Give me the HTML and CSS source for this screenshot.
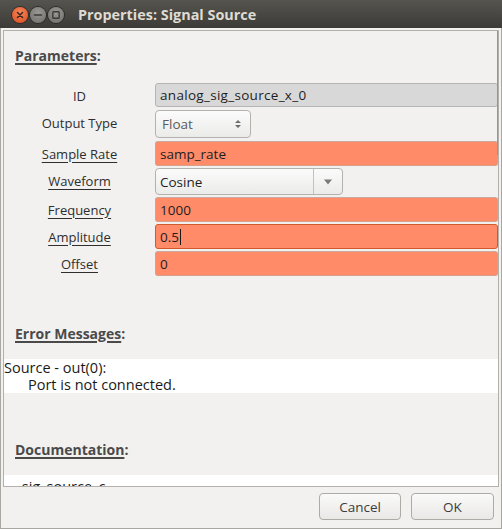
FILE: index.html
```html
<!DOCTYPE html>
<html>
<head>
<meta charset="utf-8">
<title>Properties: Signal Source</title>
<link rel="stylesheet" href="styles.css">
</head>
<body>
<div class="window">
  <div class="titlebar">
    <div class="wm-buttons">
      <span class="wm-btn close"><svg width="16" height="16" viewBox="0 0 16 16"><path d="M5.5 5.5 L10.5 10.5 M10.5 5.5 L5.5 10.5" stroke="#3a2a22" stroke-width="1.6" stroke-linecap="round"/></svg></span>
      <span class="wm-btn"><svg width="16" height="16" viewBox="0 0 16 16"><path d="M4.5 8 H11.5" stroke="#3c3b37" stroke-width="1.6" stroke-linecap="round"/></svg></span>
      <span class="wm-btn"><svg width="16" height="16" viewBox="0 0 16 16"><rect x="4.8" y="4.8" width="6.4" height="6.4" rx="0.8" fill="none" stroke="#3c3b37" stroke-width="1.4"/></svg></span>
    </div>
    <div class="title">Properties: Signal Source</div>
  </div>
  <div class="client">
    <div class="frame">
      <div class="content">
        <div class="heading heading-params"><span class="ul">Parameters</span>:</div>
        <div class="params">
          <div class="label">ID</div>
          <div class="cell"><div class="entry entry-disabled">analog_sig_source_x_0</div></div>

          <div class="label">Output Type</div>
          <div class="cell"><div class="combo combo-spin"><span>Float</span>
            <svg width="8" height="12" viewBox="0 0 8 12"><path d="M1 5 L4 2 L7 5 Z M1 7 L4 10 L7 7 Z" fill="#6e6e6e"/></svg></div></div>

          <div class="label"><span class="lu">Sample Rate</span></div>
          <div class="cell"><div class="entry entry-orange">samp_rate</div></div>

          <div class="label"><span class="lu">Waveform</span></div>
          <div class="cell"><div class="combo combo-drop"><span class="combo-text">Cosine</span><span class="combo-arrow"><svg width="10" height="6" viewBox="0 0 10 6"><path d="M1 0.5 L9 0.5 L5 5.5 Z" fill="#7a7a7a"/></svg></span></div></div>

          <div class="label"><span class="lu">Frequency</span></div>
          <div class="cell"><div class="entry entry-orange">1000</div></div>

          <div class="label"><span class="lu">Amplitude</span></div>
          <div class="cell"><div class="entry entry-orange entry-focus">0.5<span class="caret"></span></div></div>

          <div class="label"><span class="lu">Offset</span></div>
          <div class="cell"><div class="entry entry-orange">0</div></div>
        </div>

        <div class="heading heading-errors"><span class="ul">Error Messages</span>:</div>
        <div class="textbox errors">
          <div>Source - out(0):</div>
          <div class="indent">Port is not connected.</div>
        </div>

        <div class="heading heading-docs"><span class="ul">Documentation</span>:</div>
        <div class="textbox docs">
          <div class="docline"><span class="dash">---</span> sig_source_c <span class="dash">---</span></div>
        </div>
      </div>
      <div class="overlay-thumb"></div>
    </div>
    <div class="actions">
      <button class="btn btn-cancel">Cancel</button>
      <button class="btn btn-ok">OK</button>
    </div>
  </div>
</div>
</body>
</html>
```

FILE: styles.css
```css
html, body {
  margin: 0;
  padding: 0;
  background: #f2f1f0;
}

body {
  font-family: "Open Sans", "DejaVu Sans", sans-serif;
  font-size: 13px;
  color: #3c3c3c;
}

.window {
  width: 502px;
  height: 529px;
  box-sizing: border-box;
  border-left: 1px solid #a9a7a2;
  border-right: 1px solid #a9a7a2;
  border-bottom: 1px solid #a9a7a2;
  display: flex;
  flex-direction: column;
  background: #f2f1f0;
}

.titlebar {
  height: 28px;
  flex: none;
  margin: 0 -1px;
  background: linear-gradient(#55544f, #3c3b37);
  display: flex;
  align-items: center;
}

.wm-buttons {
  display: flex;
  gap: 2px;
  padding-left: 12px;
  margin-top: 2px;
}

.wm-btn {
  width: 16px;
  height: 16px;
  border-radius: 50%;
  background: radial-gradient(circle at 50% 35%, #9a9893, #6d6c67);
  box-shadow: 0 0 0 1px #2e2d2a;
  display: flex;
}

.wm-btn.close {
  background: radial-gradient(circle at 50% 35%, #f8885a, #d9481c);
}

.title {
  margin-left: 14px;
  font-family: "Open Sans", sans-serif;
  font-weight: bold;
  font-size: 14.4px;
  color: #dfdbd2;
  margin-top: 1px;
}

.client {
  flex: 1;
  display: flex;
  flex-direction: column;
  padding: 2px 2px 0 2px;
  min-height: 0;
}

.frame {
  position: relative;
  height: 457px;
  flex: none;
  box-sizing: border-box;
  border: 1px solid #b3b0ab;
  overflow: hidden;
}

.content {
  display: flex;
  flex-direction: column;
}

.heading {
  font-weight: bold;
  font-size: 14px;
  line-height: 16px;
  color: #4a4a4a;
  padding-left: 11px;
}

.heading .ul {
  text-decoration: underline;
  text-decoration-thickness: 2px;
  text-underline-offset: 2px;
}

.heading-params { margin-top: 17px; }
.heading-errors { margin-top: 50px; }
.heading-docs { margin-top: 49px; }

.params {
  margin-top: 19px;
  display: grid;
  grid-template-columns: 151px 1fr;
  grid-template-rows: 27px 31px 27px 29px 27px 27px 25px;
}

.label {
  height: 25px;
  display: flex;
  align-items: center;
  justify-content: center;
  color: #2e2e2e;
}

.label .lu {
  text-decoration: underline;
  text-underline-offset: 3px;
}

.cell {
  display: flex;
  align-items: flex-start;
}

.entry {
  flex: 1;
  height: 25px;
  box-sizing: border-box;
  border-radius: 3px;
  padding: 0 4px;
  display: flex;
  align-items: center;
  color: #1e1e1e;
  font-size: 13.5px;
  white-space: nowrap;
}

.entry-disabled {
  height: 24px;
  background: #d8d8d8;
  border: 1px solid #b5b5b5;
  letter-spacing: 0.3px;
}

.entry-orange {
  background: #ff8b69;
  border: 1px solid #d7a08c;
  border-top-color: #c9aa9e;
}

.entry-focus {
  border-color: #d05a2c;
}

.caret {
  display: inline-block;
  width: 1px;
  height: 16px;
  background: #1a1a1a;
  margin-left: 1px;
}

.combo {
  height: 28px;
  box-sizing: border-box;
  border: 1px solid #b4b2ad;
  border-radius: 4px;
  background: linear-gradient(#fbfbfb, #ebebea);
  display: flex;
  align-items: center;
}

.combo-spin {
  width: 96px;
  justify-content: space-between;
  padding: 0 8px 0 6px;
  color: #5c5c5c;
  font-size: 13.5px;
}

.combo-drop {
  width: 188px;
  height: 27px;
  font-size: 13.5px;
}

.combo-text {
  flex: 1;
  padding-left: 4px;
  color: #1e1e1e;
}

.combo-arrow {
  width: 28px;
  height: 100%;
  border-left: 1px solid #c4c2bd;
  display: flex;
  align-items: center;
  justify-content: center;
}

.textbox {
  background: #ffffff;
  color: #1a1a1a;
  font-size: 14.5px;
  line-height: 17px;
}

.errors {
  margin-top: 17px;
  padding: 0;
}

.errors .indent {
  padding-left: 24px;
}

.docs {
  margin-top: 17px;
  height: 40px;
}

.docline {
  padding-top: 3px;
}

.dash {
  color: #7a4a30;
}

.overlay-thumb {
  position: absolute;
  top: -1px;
  right: -2px;
  width: 3px;
  height: 125px;
  background: #f07746;
}

.actions {
  flex: 1;
  display: flex;
  justify-content: flex-end;
  align-items: flex-start;
  gap: 10px;
  padding: 6px 5px 0 0;
}

.btn {
  font-family: "Open Sans", sans-serif;
  font-size: 13.5px;
  color: #3c3c3c;
  height: 27px;
  box-sizing: border-box;
  border: 1px solid #adaba6;
  border-radius: 4px;
  background: linear-gradient(#fafafa, #e9e8e6);
  padding: 0;
}

.btn-cancel { width: 82px; }
.btn-ok { width: 83px; }
```
